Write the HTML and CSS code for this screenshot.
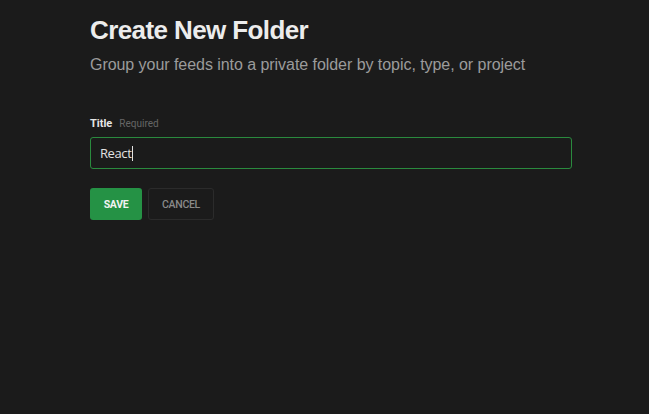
FILE: index.html
```html
<!DOCTYPE html>
<html>
<head>
<meta charset="utf-8">
<link rel="stylesheet" href="styles.css">
</head>
<body>
<main class="page">
  <h1 class="title">Create New Folder</h1>
  <p class="subtitle">Group your feeds into a private folder by topic, type, or project</p>
  <form class="form">
    <label class="label"><span class="label-main">Title</span><span class="label-hint">Required</span></label>
    <div class="input"><span class="input-text">React</span><span class="caret"></span></div>
    <div class="actions">
      <button type="button" class="btn btn-save">SAVE</button>
      <button type="button" class="btn btn-cancel">CANCEL</button>
    </div>
  </form>
</main>
</body>
</html>
```

FILE: styles.css
```css
html, body {
  margin: 0;
  padding: 0;
  background: #1b1b1b;
  height: 100%;
}
.page {
  padding: 14px 0 0 90px;
  width: 482px;
  font-family: "Liberation Sans", Arial, sans-serif;
}
.title {
  margin: 0;
  font-size: 26px;
  line-height: 32px;
  font-weight: bold;
  color: #ececec;
  letter-spacing: -0.6px;
}
.subtitle {
  margin: 9px 0 0;
  font-size: 16px;
  line-height: 20px;
  color: #9b9b9b;
  letter-spacing: -0.05px;
}
.form {
  margin-top: 42px;
  font-family: "Roboto", "Open Sans", sans-serif;
}
.label {
  display: flex;
  align-items: baseline;
  gap: 7px;
  height: 16px;
}
.label-main {
  font-size: 11px;
  font-weight: bold;
  color: #e6e6e6;
}
.label-hint {
  font-size: 10px;
  color: #666666;
}
.input {
  margin-top: 4px;
  height: 30px;
  border: 1px solid #2a8a3e;
  border-radius: 3px;
  display: flex;
  align-items: center;
  padding-left: 9px;
}
.input-text {
  font-family: "Open Sans", "Noto Sans", sans-serif;
  font-size: 13px;
  color: #e2e2e2;
  letter-spacing: -0.4px;
}
.caret {
  width: 1px;
  height: 15px;
  background: #e2e2e2;
  margin-left: 1px;
}
.actions {
  display: flex;
  gap: 6px;
  margin-top: 19px;
}
.btn {
  height: 32px;
  border-radius: 3px;
  font-family: "Roboto", "Liberation Sans", sans-serif;
  font-size: 10.5px;
  font-weight: bold;
  letter-spacing: -0.3px;
  padding: 0;
  cursor: pointer;
}
.btn-save {
  width: 52px;
  background: #259245;
  border: none;
  color: #f2f2f2;
}
.btn-cancel {
  width: 66px;
  background: transparent;
  border: 1px solid #2b2b2b;
  color: #8a8a8a;
  font-weight: 500;
}
```
